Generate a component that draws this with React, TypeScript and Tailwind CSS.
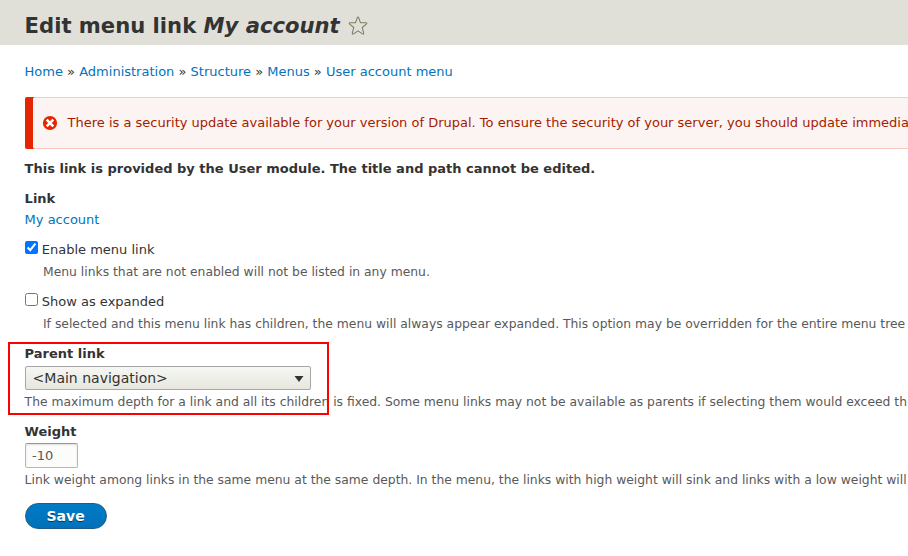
import type { ReactNode } from 'react';

const crumbs = ['Home', 'Administration', 'Structure', 'Menus', 'User account menu'];

function Description({ children, indent = false }: { children: ReactNode; indent?: boolean }) {
  return (
    <div className={`h-5 whitespace-nowrap text-[12.35px] leading-5 text-[#595959] ${indent ? 'pl-[18.4px]' : ''}`}>
      {children}
    </div>
  );
}

function Label({ children }: { children: ReactNode }) {
  return <div className="h-5 font-bold leading-5">{children}</div>;
}

function CheckRow({ label, checked = false }: { label: string; checked?: boolean }) {
  return (
    <label className="flex h-5 items-start">
      <input type="checkbox" defaultChecked={checked} className="mt-px size-[13px] shrink-0" />
      <span className="ml-[4.2px] leading-5">{label}</span>
    </label>
  );
}

export default function App() {
  return (
    <div className="h-[556px] w-full overflow-hidden bg-white font-['DejaVu_Sans',sans-serif] text-[13px] text-[#333]">
      <header className="flex h-[45px] items-center bg-[#e0e0d8] pl-[24.6px] pt-[6px]">
        <h1 className="whitespace-nowrap text-[21.14px] font-bold leading-6">
          Edit menu link <em>My account</em>
        </h1>
        <svg className="ml-[8.4px] h-[20px] w-[20px]" viewBox="0 0 19 19" fill="none" stroke="#7d7b62" strokeWidth="1" strokeLinejoin="round">
          <path d="M9.5 1Q10 1 10.3 2L11.8 6.3 16.9 6.5Q18.6 6.7 17.4 7.8L13.5 10.9 14.9 16.2Q15 17.8 13.7 17L9.5 14.1 5.3 17Q4 17.8 4.1 16.2L5.5 10.9 1.6 7.8Q.4 6.7 2.1 6.5L7.2 6.3 8.7 2Q9 1 9.5 1Z" />
        </svg>
      </header>

      <main className="pl-[24.6px]">
        <nav className="mt-[17px] h-5 whitespace-nowrap leading-5">
          {crumbs.map((crumb, i) => (
            <span key={crumb}>
              {i > 0 && ' » '}
              <a className="text-[#0074bd]">{crumb}</a>
            </span>
          ))}
        </nav>

        <div className="mt-[15px] flex h-[52px] rounded-l-[2px] bg-[#e62600]">
          <div className="ml-2 flex flex-1 items-center overflow-hidden rounded-l-[2px] border-y border-[#f9c9bf] bg-[#fcf4f2] pl-[9.4px] text-[#a51b00]">
            <svg className="size-[16px] shrink-0" viewBox="0 0 16 16">
              <circle cx="8" cy="8" r="7.1" fill="#e32700" />
              <path d="m4.7 4.7 6.6 6.6m0-6.6-6.6 6.6" stroke="#fff" strokeWidth="2.6" />
            </svg>
            <span className="ml-[9.6px] whitespace-nowrap leading-5">
              There is a security update available for your version of Drupal. To ensure the security of your server, you should update immediately!
            </span>
          </div>
        </div>

        <p className="mt-[10px] h-5 font-bold leading-5">
          This link is provided by the User module. The title and path cannot be edited.
        </p>

        <div className="mt-[10px]">
          <Label>Link</Label>
          <a className="mt-px block h-5 leading-5 text-[#0074bd]">My account</a>
        </div>

        <div className="mt-[10px]">
          <CheckRow label="Enable menu link" checked />
          <div className="h-[2px]" />
          <Description indent>Menu links that are not enabled will not be listed in any menu.</Description>
        </div>

        <div className="mt-[10px]">
          <CheckRow label="Show as expanded" />
          <div className="h-[2px]" />
          <Description indent>
            If selected and this menu link has children, the menu will always appear expanded. This option may be overridden for the entire menu tree
          </Description>
        </div>

        <div className="relative mt-[10px]">
          <Label>Parent link</Label>
          <button className="mt-[2px] flex h-6 w-[286px] items-center rounded-[2px] border border-[#a6a6a6] bg-linear-to-b from-[#f6f6f3] to-[#e7e7df] pl-[7px] pr-[6px] text-left text-[14px]">
            <span className="flex-1 leading-5">&lt;Main navigation&gt;</span>
            <svg className="mt-[2px] size-[10px]" viewBox="0 0 10 10">
              <path d="M.5 2h9L5 8Z" fill="#333" />
            </svg>
          </button>
          <div className="h-[2px]" />
          <Description>
            The maximum depth for a link and all its children is fixed. Some menu links may not be available as parents if selecting them would exceed th
          </Description>
          <div className="pointer-events-none absolute -left-[16.6px] -top-[2px] h-[73px] w-[321px] border-2 border-[#ff0000]" />
        </div>

        <div className="mt-[10px]">
          <Label>Weight</Label>
          <input
            defaultValue="-10"
            className="mt-px block h-[25px] w-[53px] rounded-[2px] border border-[#b8b8b8] border-t-[#999] bg-[#fcfcfa] px-[6.4px] text-[13px] text-[#595959] shadow-[inset_0_1px_2px_rgba(0,0,0,0.125)]"
          />
          <div className="h-[2px]" />
          <Description>
            Link weight among links in the same menu at the same depth. In the menu, the links with high weight will sink and links with a low weight will
          </Description>
        </div>

        <button className="mt-[13px] flex h-[26px] w-[82px] items-center justify-center rounded-full border border-[#1e5c90] bg-linear-to-b from-[#007bc6] to-[#0071b8] text-[14px] font-bold leading-5 text-white [text-shadow:0_1px_rgba(0,0,0,0.5)]">
          Save
        </button>
      </main>
    </div>
  );
}
